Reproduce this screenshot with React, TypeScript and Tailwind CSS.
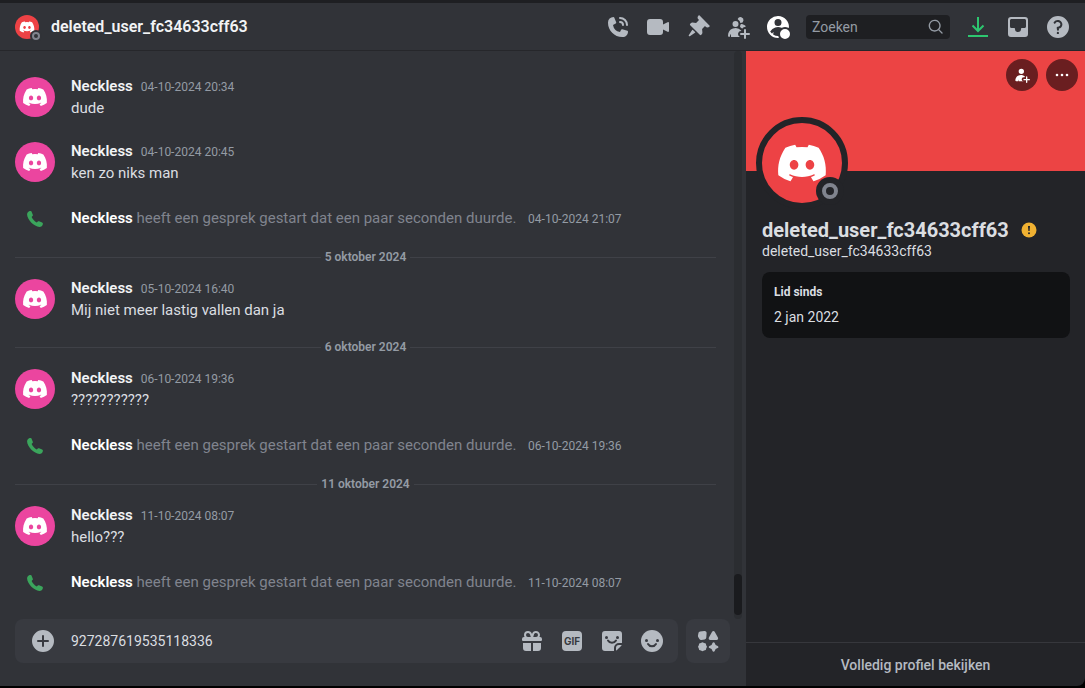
import { useState } from 'react';
import type { ReactNode } from 'react';
import { FaDiscord } from 'react-icons/fa6';

interface ChatItem {
  type: 'message' | 'call' | 'divider';
  date: string;
  text?: string;
}

const CALL_TEXT = 'heeft een gesprek gestart dat een paar seconden duurde.';

const items: ChatItem[] = [
  { type: 'message', date: '04-10-2024 20:34', text: 'dude' },
  { type: 'message', date: '04-10-2024 20:45', text: 'ken zo niks man' },
  { type: 'call', date: '04-10-2024 21:07' },
  { type: 'divider', date: '5 oktober 2024' },
  {
    type: 'message',
    date: '05-10-2024 16:40',
    text: 'Mij niet meer lastig vallen dan ja',
  },
  { type: 'divider', date: '6 oktober 2024' },
  { type: 'message', date: '06-10-2024 19:36', text: '???????????' },
  { type: 'call', date: '06-10-2024 19:36' },
  { type: 'divider', date: '11 oktober 2024' },
  { type: 'message', date: '11-10-2024 08:07', text: 'hello???' },
  { type: 'call', date: '11-10-2024 08:07' },
];

const paths = {
  call: 'M2 7.4A5.4 5.4 0 0 1 7.4 2c.36 0 .7.22.83.55l1.93 4.64a1 1 0 0 1-.43 1.25L7 10a8.52 8.52 0 0 0 7 7l1.12-2.24a1 1 0 0 1 1.19-.51l5.06 1.56c.38.11.63.46.63.85C22 19.6 19.6 22 16.66 22h-.37C8.39 22 2 15.6 2 7.71V7.4ZM13 3a1 1 0 0 1 1-1 8 8 0 0 1 8 8 1 1 0 1 1-2 0 6 6 0 0 0-6-6 1 1 0 0 1-1-1ZM13 7a1 1 0 0 1 1-1 4 4 0 0 1 4 4 1 1 0 1 1-2 0 2 2 0 0 0-2-2 1 1 0 0 1-1-1Z',
  video:
    'M4 4a3 3 0 0 0-3 3v10a3 3 0 0 0 3 3h10a3 3 0 0 0 3-3v-2.6l4.55 2.3A1 1 0 0 0 23 15.8V8.2a1 1 0 0 0-1.45-.9L17 9.6V7a3 3 0 0 0-3-3H4Z',
  pin: 'M19.38 11.38a3 3 0 0 0 4.24 0l.03-.03a.5.5 0 0 0 0-.7L13.35.35a.5.5 0 0 0-.7 0l-.03.03a3 3 0 0 0 0 4.24L13 5l-2.92 2.92-3.65-.34a2 2 0 0 0-1.6.58l-.62.63a1 1 0 0 0 0 1.42l9.58 9.58a1 1 0 0 0 1.42 0l.63-.63a2 2 0 0 0 .58-1.6l-.34-3.64L19 11l.38.38ZM9.07 17.07a.5.5 0 0 1-.08.77l-5.15 3.43a.5.5 0 0 1-.63-.06l-.42-.42a.5.5 0 0 1-.06-.63L6.16 15a.5.5 0 0 1 .77-.08l2.14 2.14Z',
  addFriends:
    'M14.5 8a3 3 0 1 0-2.7-4.3c-.2.4.06.86.44 1.12a5 5 0 0 1 2.14 3.08c.01.06.06.1.12.1ZM16.62 13.17c-.22.29-.65.37-.92.14-.34-.3-.7-.57-1.09-.82-.52-.33-.7-1.05-.47-1.63.11-.27.2-.57.26-.87.11-.54.55-1 1.1-.92 1.6.2 3.04.92 4.15 1.98.3.27-.25.95-.65.95a3 3 0 0 0-2.38 1.17ZM15.19 15.61c.13.16.02.39-.19.39a3 3 0 0 0-1.52 5.59c.2.12.26.41.02.41h-8a.5.5 0 0 1-.5-.5v-2.1c0-.25-.31-.33-.42-.1-.32.67-.67 1.58-.88 2.54a.2.2 0 0 1-.2.16A1.5 1.5 0 0 1 2 20.5a7.5 7.5 0 0 1 13.19-4.89ZM9.5 12a3 3 0 1 0 0-6 3 3 0 0 0 0 6ZM19 14a1 1 0 0 1 1 1v3h3a1 1 0 0 1 0 2h-3v3a1 1 0 0 1-2 0v-3h-3a1 1 0 1 1 0-2h3v-3a1 1 0 0 1 1-1Z',
  profile:
    'M23 12.38c-.02.38-.45.58-.78.4a6.97 6.97 0 0 0-6.27-.08.54.54 0 0 1-.44 0 8.97 8.97 0 0 0-11.16 3.55c-.1.15-.1.35 0 .5.37.58.8 1.13 1.28 1.61.24.24.64.15.8-.15.19-.38.39-.73.58-1.02.14-.21.43-.1.4.15l-.19 1.96c-.02.19.07.37.23.47A8.96 8.96 0 0 0 12 21a.4.4 0 0 1 .38.27c.1.33.25.65.4.95.18.34-.02.76-.4.77L12 23a11 11 0 1 1 11-10.62ZM15.5 7.5a3.5 3.5 0 1 1-7 0 3.5 3.5 0 0 1 7 0ZM24 19a5 5 0 1 1-10 0 5 5 0 0 1 10 0Z',
  inbox:
    'M5 2a3 3 0 0 0-3 3v14a3 3 0 0 0 3 3h14a3 3 0 0 0 3-3V5a3 3 0 0 0-3-3H5ZM4 5.5C4 4.67 4.67 4 5.5 4h13c.83 0 1.5.67 1.5 1.5v6c0 .83-.67 1.5-1.5 1.5h-2.65c-.5 0-.85.5-.85 1a3 3 0 1 1-6 0c0-.5-.35-1-.85-1H5.5A1.5 1.5 0 0 1 4 11.5v-6Z',
  help: 'M12 23a11 11 0 1 0 0-22 11 11 0 0 0 0 22Zm-.28-16c-.98 0-1.81.47-2.27 1.14A1 1 0 1 1 7.8 7.01 4.73 4.73 0 0 1 11.72 5c2.5 0 4.65 1.88 4.65 4.38 0 2.1-1.54 3.77-3.52 4.24l.14 1a1 1 0 0 1-1.98.27l-.28-2a1 1 0 0 1 .99-1.14c1.54 0 2.65-1.14 2.65-2.38 0-1.23-1.1-2.37-2.65-2.37ZM13 17.88a1.13 1.13 0 1 1-2.25 0 1.13 1.13 0 0 1 2.25 0Z',
  search:
    'M15.62 17.03a9 9 0 1 1 1.41-1.41l4.68 4.67a1 1 0 0 1-1.42 1.42l-4.67-4.68ZM17 10a7 7 0 1 1-14 0 7 7 0 0 1 14 0Z',
  add: 'M12 23a11 11 0 1 0 0-22 11 11 0 0 0 0 22Zm0-17a1 1 0 0 1 1 1v4h4a1 1 0 1 1 0 2h-4v4a1 1 0 1 1-2 0v-4H7a1 1 0 1 1 0-2h4V7a1 1 0 0 1 1-1Z',
  gift: 'M4 6a4 4 0 0 1 4-4h.09c1.8 0 3.39 1.18 3.91 2.9A4.09 4.09 0 0 1 15.91 2H16a4 4 0 0 1 3.46 6H20a2 2 0 0 1 2 2v1a1 1 0 0 1-1 1H3a1 1 0 0 1-1-1v-1a2 2 0 0 1 2-2h.54A3.98 3.98 0 0 1 4 6Zm4-2a2 2 0 1 0 0 4h2.78l-.75-2.48A2.09 2.09 0 0 0 8.09 4H8Zm8 4a2 2 0 1 0 0-4h-.09c-.9 0-1.68.59-1.94 1.45L13.22 8H16ZM3 14h8v8H6a3 3 0 0 1-3-3v-5Zm10 0h8v5a3 3 0 0 1-3 3h-5v-8Z',
  apps: 'M4 2.4 8.3 2a2 2 0 0 1 2.3 2.2l-.3 4.4a2 2 0 0 1-1.6 1.8l-3.3.5a2 2 0 0 1-2-.9L2.2 7.9A2 2 0 0 1 2 6.3l.5-2.6a1.7 1.7 0 0 1 1.5-1.3ZM16.1 2.8a1.5 1.5 0 0 1 2.6 0l3.2 5.8a1.5 1.5 0 0 1-1.3 2.3h-6.4a1.5 1.5 0 0 1-1.3-2.3l3.2-5.8ZM6.5 13.3l1.6.8 1.7.4.4 1.7.8 1.6-.8 1.6-.4 1.7-1.7.4-1.6.8-1.6-.8-1.7-.4-.4-1.7-.8-1.6.8-1.6.4-1.7 1.7-.4 1.6-.8ZM16.5 13.9a1.2 1.2 0 0 1 2.2 0l.7 1.6c.1.3.4.6.7.7l1.6.7a1.2 1.2 0 0 1 0 2.2l-1.6.7c-.3.1-.6.4-.7.7l-.7 1.6a1.2 1.2 0 0 1-2.2 0l-.7-1.6c-.1-.3-.4-.6-.7-.7l-1.6-.7a1.2 1.2 0 0 1 0-2.2l1.6-.7c.3-.1.6-.4.7-.7l.7-1.6Z',
  userPlus:
    'M15 6.5a4 4 0 1 1-8 0 4 4 0 0 1 8 0ZM10.5 12c2.2 0 4.2.8 5.7 2.2.5.5.1 1.3-.6 1.3h-1.1a3 3 0 0 0 0 6h-7v-2.7l-.9 2.7H3.5A1.5 1.5 0 0 1 2 20c0-4.5 3.6-8 8.5-8ZM19 14a1 1 0 0 1 1 1v3h3a1 1 0 0 1 0 2h-3v3a1 1 0 0 1-2 0v-3h-3a1 1 0 1 1 0-2h3v-3a1 1 0 0 1 1-1Z',
};

function Icon({ d, className = 'size-6' }: { d: string; className?: string }) {
  return (
    <svg viewBox="0 0 24 24" fill="currentColor" fillRule="evenodd" className={className}>
      <path d={d} />
    </svg>
  );
}

function IconButton({
  label,
  className = '',
  children,
}: {
  label: string;
  className?: string;
  children: ReactNode;
}) {
  return (
    <button
      type="button"
      aria-label={label}
      className={`shrink-0 cursor-pointer hover:text-white ${className}`}
    >
      {children}
    </button>
  );
}

function Avatar() {
  return (
    <div className="mt-[2px] flex size-10 shrink-0 items-center justify-center rounded-full bg-[#eb459f] text-white">
      <FaDiscord className="size-[26px]" />
    </div>
  );
}

function Message({ date, text }: ChatItem) {
  return (
    <li className="mt-[21px] flex h-11 gap-4 [.divider+&]:mt-3">
      <Avatar />
      <div>
        <div className="flex h-[22px] items-baseline gap-2 leading-[22px]">
          <span className="font-semibold text-[#f2f3f5]">Neckless</span>
          <time className="text-xs text-[#949ba4]">{date}</time>
        </div>
        <p className="leading-[22px] text-[#dbdee1]">{text}</p>
      </div>
    </li>
  );
}

function CallRow({ date }: ChatItem) {
  return (
    <li className="call mt-[23px] flex h-[22px] items-center gap-4">
      <div className="flex w-10 shrink-0 justify-center text-[#3ba55c]">
        <svg viewBox="0 0 16 16" fill="currentColor" className="mt-[2px] size-4">
          <path d="M.5 1.7C1.3.5 2.6-.1 3.7.1c.5.1.8.4 1 .9l1.1 2.8c.2.5.1.9-.3 1.3L4.6 6c.9 2.2 2.9 4.3 5.2 5.4l1-.9c.4-.4.8-.4 1.3-.2l3 1.2c.6.3.9.8.8 1.4-.3 1.7-1.7 3-3.5 3C7 15.6.5 9 .1 3.8c0-.8 0-1.5.4-2.1Z" />
        </svg>
      </div>
      <p className="leading-[22px] text-[#80848e]">
        <span className="font-semibold text-white">Neckless</span> {CALL_TEXT}{' '}
        <time className="ml-2 text-xs text-[#949ba4]">{date}</time>
      </p>
    </li>
  );
}

function Divider({ date }: ChatItem) {
  return (
    <li className="divider mt-[18px] flex h-4 items-center gap-1 text-xs font-semibold text-[#949ba4] before:h-px before:flex-1 before:bg-[#3f4147] after:h-px after:flex-1 after:bg-[#3f4147] [.call+&]:mt-5">
      {date}
    </li>
  );
}

function Header() {
  return (
    <header className="flex h-12 shrink-0 items-center border-b border-[#26272b] bg-[#313338] px-[15px] text-[#b5bac1]">
      <div className="relative flex size-6 items-center justify-center rounded-full bg-[#ed4245] text-white">
        <FaDiscord className="size-4" />
        <span className="absolute -right-[3px] -bottom-[3px] size-3 rounded-full bg-[#313338] p-[2px]">
          <span className="block size-2 rounded-full border-2 border-[#80848e]" />
        </span>
      </div>
      <h1 className="ml-3 flex-1 truncate text-base font-semibold text-[#f2f3f5]">
        deleted_user_fc34633cff63
      </h1>
      <div className="flex items-center gap-4">
        <IconButton label="Spraakoproep starten">
          <Icon d={paths.call} />
        </IconButton>
        <IconButton label="Videogesprek starten">
          <Icon d={paths.video} />
        </IconButton>
        <IconButton label="Vastgemaakte berichten">
          <Icon d={paths.pin} />
        </IconButton>
        <IconButton label="Vrienden toevoegen">
          <Icon d={paths.addFriends} />
        </IconButton>
        <IconButton label="Gebruikersprofiel" className="text-white">
          <Icon d={paths.profile} />
        </IconButton>
        <label className="flex h-6 w-36 items-center rounded-sm bg-[#1e1f22] px-[6px] text-[#949ba4]">
          <input
            type="text"
            aria-label="Zoeken"
            placeholder="Zoeken"
            className="min-w-0 flex-1 text-sm outline-none placeholder:text-[#949ba4]"
          />
          <Icon d={paths.search} className="size-4" />
        </label>
        <IconButton label="Update klaar" className="text-[#2dc770]">
          <svg
            viewBox="0 0 24 24"
            fill="none"
            stroke="currentColor"
            strokeWidth="2"
            className="size-6"
          >
            <path d="M12 2v14M6.5 10.5 12 16l5.5-5.5M2 21h20" />
          </svg>
        </IconButton>
        <IconButton label="Postvak">
          <Icon d={paths.inbox} />
        </IconButton>
        <IconButton label="Help">
          <Icon d={paths.help} />
        </IconButton>
      </div>
    </header>
  );
}

function Composer() {
  const [value, setValue] = useState('927287619535118336');

  return (
    <form className="flex gap-2 pr-4 pb-[23px] pl-[15px] text-[#b5bac1]">
      <div className="flex h-11 flex-1 items-center gap-4 rounded-lg bg-[#383a40] px-[14px]">
        <IconButton label="Bijlage toevoegen" className="pl-[2px]">
          <Icon d={paths.add} />
        </IconButton>
        <input
          type="text"
          aria-label="Bericht"
          value={value}
          onChange={(e) => setValue(e.target.value)}
          className="min-w-0 flex-1 text-sm text-[#dbdee1] outline-none"
        />
        <IconButton label="Cadeau">
          <Icon d={paths.gift} />
        </IconButton>
        <IconButton label="GIF">
          <span className="m-[2px] flex size-5 items-center justify-center rounded-sm bg-[#b5bac1] font-['Inter',sans-serif] text-[10px] font-bold text-[#383a40]">
            GIF
          </span>
        </IconButton>
        <IconButton label="Sticker">
          <svg viewBox="0 0 24 24" fill="none" className="size-6">
            <path
              d="M5 2h14a3 3 0 0 1 3 3v9h-3a5 5 0 0 0-5 5v3H5a3 3 0 0 1-3-3V5a3 3 0 0 1 3-3Z"
              fill="currentColor"
            />
            <path
              d="M21.7 16a3 3 0 0 1-.6 1l-4.100 4.100a3 3 0 0 1-1 .6V19a3 3 0 0 1 3-3h2.700Z"
              fill="currentColor"
            />
            <circle cx="6.5" cy="8.5" r="1.5" className="fill-[#383a40]" />
            <circle cx="17.5" cy="8.5" r="1.5" className="fill-[#383a40]" />
            <path
              d="M8 11.5c1.700 3 6.300 3 8 0"
              strokeWidth="2"
              strokeLinecap="round"
              className="stroke-[#383a40]"
            />
          </svg>
        </IconButton>
        <IconButton label="Emoji">
          <svg viewBox="0 0 24 24" fill="none" className="size-6">
            <circle cx="12" cy="12" r="11" fill="currentColor" />
            <circle cx="6.5" cy="11.5" r="1.5" className="fill-[#383a40]" />
            <circle cx="17.5" cy="11.5" r="1.5" className="fill-[#383a40]" />
            <path
              d="M8 15c1.700 3 6.300 3 8 0"
              strokeWidth="2"
              strokeLinecap="round"
              className="stroke-[#383a40]"
            />
          </svg>
        </IconButton>
      </div>
      <IconButton
        label="Apps"
        className="flex size-11 items-center justify-center rounded-lg bg-[#383a40]"
      >
        <Icon d={paths.apps} />
      </IconButton>
    </form>
  );
}

function ProfilePanel() {
  return (
    <aside className="flex w-[339px] shrink-0 flex-col rounded-br-lg bg-[#232428] text-[#dbdee1]">
      <div className="flex h-[120px] justify-end gap-2 bg-[#ec4444] px-[7px] pt-2 text-white">
        <IconButton
          label="Vriend toevoegen"
          className="flex size-8 items-center justify-center rounded-full bg-[#6a1e20]"
        >
          <Icon d={paths.userPlus} className="size-4" />
        </IconButton>
        <IconButton
          label="Meer"
          className="flex size-8 items-center justify-center rounded-full bg-[#6a1e20]"
        >
          <svg viewBox="0 0 16 16" fill="currentColor" className="size-4">
            <circle cx="3" cy="8" r="1.3" />
            <circle cx="8" cy="8" r="1.3" />
            <circle cx="13" cy="8" r="1.3" />
          </svg>
        </IconButton>
      </div>
      <div className="relative -mt-[54px] ml-[10px] flex size-[92px] items-center justify-center rounded-full border-6 border-[#232428] bg-[#ed4245] text-white">
        <FaDiscord className="size-[52px]" />
        <span className="absolute right-[-2px] bottom-[-2px] size-7 rounded-full bg-[#232428] p-[6px]">
          <span className="block size-4 rounded-full border-4 border-[#80848e]" />
        </span>
      </div>
      <div className="px-4 pt-[9px]">
        <h2 className="flex items-center gap-3 text-xl leading-6 font-bold">
          deleted_user_fc34633cff63
          <svg viewBox="0 0 16 16" className="size-4">
            <circle cx="8" cy="8" r="7.5" className="fill-[#f0b132]" />
            <path d="M7 4h2l-.4 5H7.4Z" className="fill-[#232428]" />
            <circle cx="8" cy="11.2" r="1" className="fill-[#232428]" />
          </svg>
        </h2>
        <p className="text-sm leading-[18px]">deleted_user_fc34633cff63</p>
      </div>
      <section className="mt-3 mr-[15px] ml-4 rounded-lg bg-[#111214] p-3">
        <h3 className="text-xs leading-4 font-bold">Lid sinds</h3>
        <p className="mt-2 text-sm leading-[18px]">2 jan 2022</p>
      </section>
      <button
        type="button"
        className="mt-auto h-11 cursor-pointer border-t border-[#36373c] text-sm font-medium text-[#b5bac1] hover:text-white"
      >
        Volledig profiel bekijken
      </button>
    </aside>
  );
}

export default function App() {
  return (
    <div className="flex h-screen flex-col overflow-hidden border-t-[3px] border-b-2 border-t-[#1e1f22] border-b-black bg-black font-['Roboto','Noto_Sans',sans-serif]">
      <Header />
      <div className="flex min-h-0 flex-1">
        <main className="flex min-w-0 flex-1 flex-col bg-[#313338]">
          <div className="flex min-h-0 flex-1 pr-1">
            <ol className="flex min-w-0 flex-1 flex-col justify-end overflow-hidden pr-[18px] pb-[26px] pl-[15px] text-[15px]">
              {items.map((item, i) => {
                if (item.type === 'message') return <Message key={i} {...item} />;
                if (item.type === 'call') return <CallRow key={i} {...item} />;
                return <Divider key={i} {...item} />;
              })}
            </ol>
            {/* scrollbar */}
            <div className="flex w-2 flex-col justify-end rounded-full bg-[#2b2d31] pb-1">
              <div className="h-[41px] rounded-full bg-[#1a1b1e]" />
            </div>
          </div>
          <Composer />
        </main>
        <ProfilePanel />
      </div>
    </div>
  );
}
